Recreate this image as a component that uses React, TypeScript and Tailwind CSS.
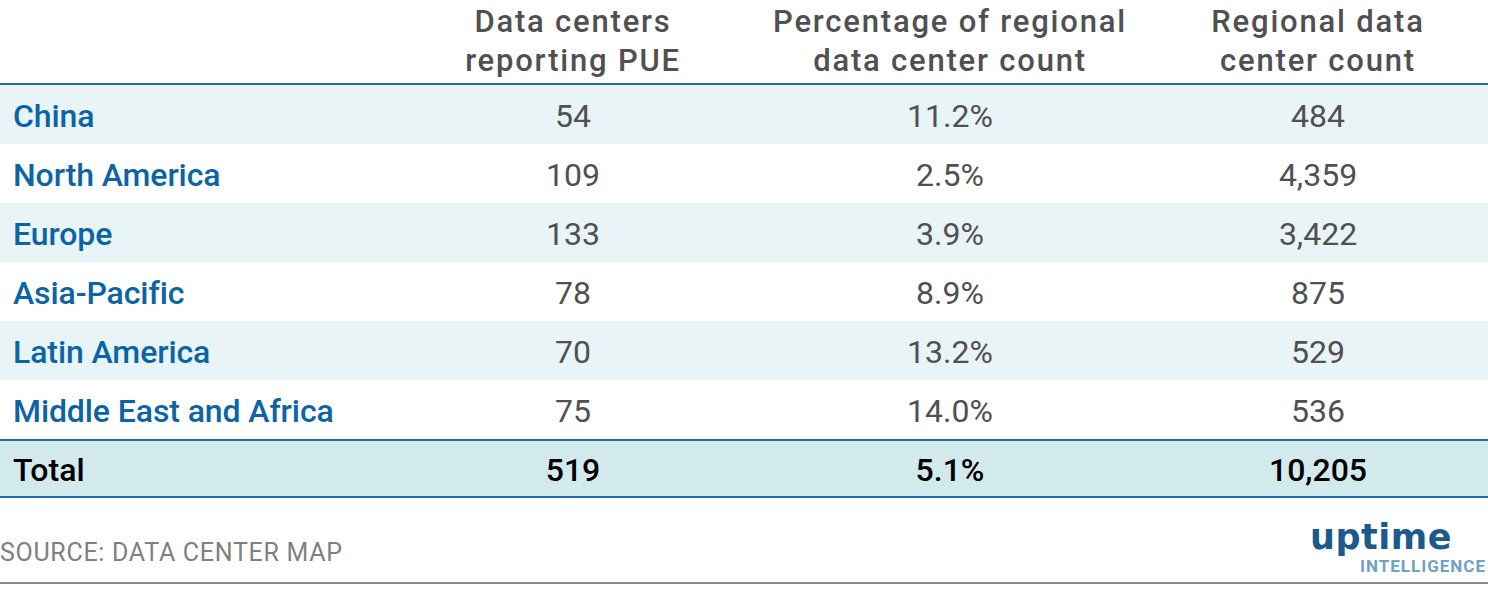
import React from 'react'

const rows = [
  { region: 'China', reporting: '54', pct: '11.2%', count: '484', shaded: true },
  { region: 'North America', reporting: '109', pct: '2.5%', count: '4,359', shaded: false },
  { region: 'Europe', reporting: '133', pct: '3.9%', count: '3,422', shaded: true },
  { region: 'Asia-Pacific', reporting: '78', pct: '8.9%', count: '875', shaded: false },
  { region: 'Latin America', reporting: '70', pct: '13.2%', count: '529', shaded: true },
  { region: 'Middle East and Africa', reporting: '75', pct: '14.0%', count: '536', shaded: false },
]

function App() {
  return (
    <div className="w-[1488px] h-[591px] bg-white overflow-hidden font-['Roboto',sans-serif]">
      {/* header */}
      <div className="grid grid-cols-[385px_376px_378px_1fr] h-[85px] border-b-2 border-[#1f6db0] text-[31px] leading-[39px] font-medium text-[#505052] tracking-[1.8px]">
        <div />
        <div className="text-center pt-[2px]">Data centers<br />reporting PUE</div>
        <div className="text-center pt-[2px]">Percentage of regional<br />data center count</div>
        <div className="text-center pt-[2px] pl-[9px]">Regional data<br />center count</div>
      </div>

      {rows.map((r) => (
        <div
          key={r.region}
          className={`grid grid-cols-[385px_376px_378px_1fr] h-[59px] items-center pt-[3px] text-[32px] ${r.shaded ? 'bg-[#e8f4f6]' : 'bg-white'}`}
        >
          <div className="pl-[13px] font-medium text-[#0b64a6] tracking-[-0.1px]">{r.region}</div>
          <div className="text-center text-[#505052]">{r.reporting}</div>
          <div className="text-center text-[#505052]">{r.pct}</div>
          <div className="text-center pl-[9px] text-[#505052]">{r.count}</div>
        </div>
      ))}

      {/* total */}
      <div className="grid grid-cols-[385px_376px_378px_1fr] h-[59px] items-center pt-[2px] border-y-2 border-[#1f6db0] bg-[#d3eaec] text-[32px] font-medium text-black">
        <div className="pl-[13px]">Total</div>
        <div className="text-center">519</div>
        <div className="text-center">5.1%</div>
        <div className="text-center pl-[9px]">10,205</div>
      </div>

      {/* footer */}
      <div className="flex items-end justify-between h-[86px] border-b-2 border-[#8c8c8c] pb-[8px]">
        <div className="text-[25px] leading-none text-[#808080] tracking-[0.7px] mb-[9px]">SOURCE: DATA CENTER MAP</div>
        <div className="flex flex-col items-end">
          <div className="font-['DejaVu_Sans',sans-serif] font-bold text-[35px] leading-[32px] tracking-[0.5px] text-[#1a5a8c] pr-[36px]">uptime</div>
          <div className="text-[17px] leading-[16px] font-bold tracking-[1px] text-[#6ea2c8] mt-[5px] mr-[2px]">INTELLIGENCE</div>
        </div>
      </div>
    </div>
  )
}

export default App
